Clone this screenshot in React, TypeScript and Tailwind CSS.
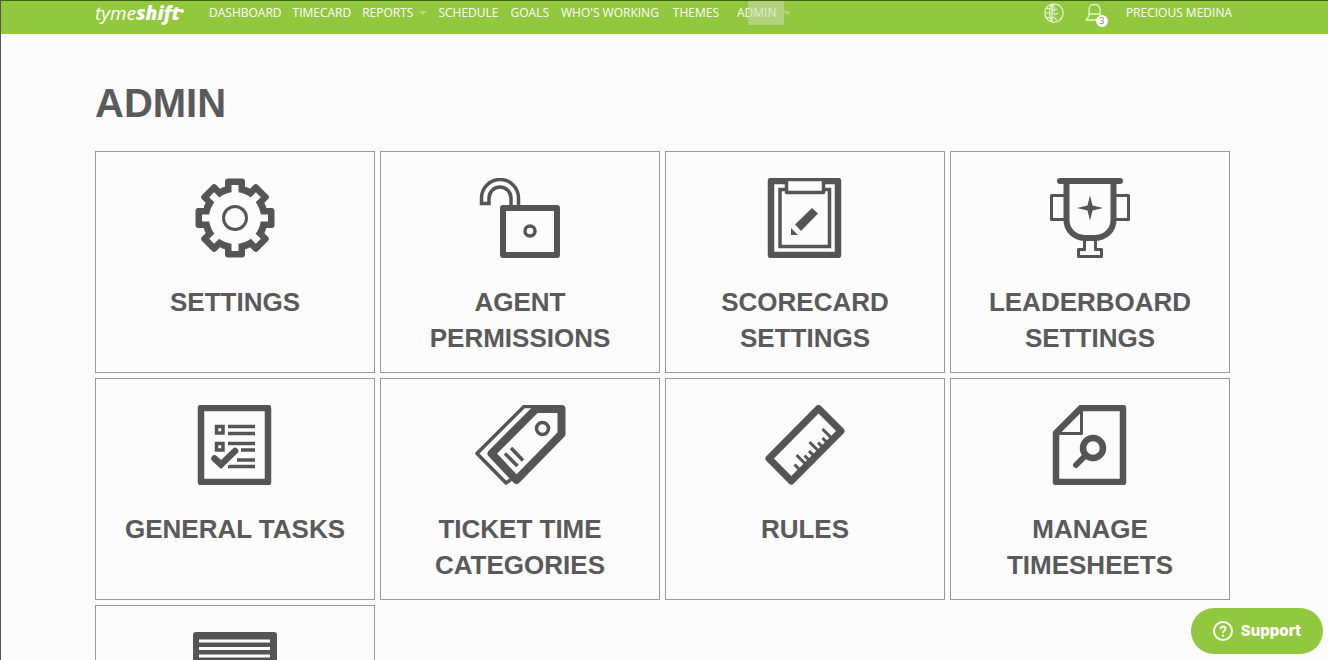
import type { ReactNode } from 'react';

const NAV_ITEMS = [
  { label: 'Dashboard', spacing: 'mr-[11px]' },
  { label: 'Timecard', spacing: 'mr-[11px]' },
  { label: 'Reports', spacing: 'mr-[11px]', caret: true },
  { label: 'Schedule', spacing: 'mr-3' },
  { label: 'Goals', spacing: 'mr-3' },
  { label: "Who's Working", spacing: 'mr-[14px]' },
  { label: 'Themes', spacing: 'mr-[18px]' },
  { label: 'Admin', spacing: '', caret: true, active: true },
];

function Icon({ children }: { children: ReactNode }) {
  return (
    <svg
      viewBox="0 0 110 80"
      className="h-20 w-[110px] shrink-0 text-[#555]"
      fill="none"
      stroke="currentColor"
      strokeWidth="6"
      strokeLinejoin="round"
      aria-hidden="true"
    >
      {children}
    </svg>
  );
}

const GEAR_ANGLES = [0, 45, 90, 135, 180, 225, 270, 315];

function GearIcon() {
  return (
    <Icon>
      <g fill="currentColor" stroke="none">
        <circle cx="55" cy="40" r="33" />
        {GEAR_ANGLES.map((a) => (
          <rect key={a} x="45" y="0.5" width="20" height="20" rx="3" transform={`rotate(${a} 55 40)`} />
        ))}
      </g>
      <g fill="#fcfcfc" stroke="none">
        <circle cx="55" cy="40" r="26" />
        {GEAR_ANGLES.map((a) => (
          <rect key={a} x="51.5" y="7" width="7" height="12" transform={`rotate(${a} 55 40)`} />
        ))}
      </g>
      <circle cx="55" cy="40" r="11.5" strokeWidth="3" />
    </Icon>
  );
}

function LockIcon() {
  return (
    <Icon>
      <path d="M53.5 29V20A18.5 18.5 0 0 0 16.5 20V25.5H24V20A11 11 0 0 1 46 20V29" strokeWidth="3.5" strokeLinejoin="miter" />
      <rect x="38" y="30" width="54" height="47" />
      <circle cx="65" cy="53" r="5" strokeWidth="3.5" />
    </Icon>
  );
}

function ClipboardIcon() {
  return (
    <Icon>
      <rect x="21" y="3" width="67" height="74" strokeWidth="6.5" />
      <rect x="30" y="11.5" width="49.5" height="57" strokeWidth="3.5" strokeLinejoin="miter" />
      <path d="M36.5 1.5H73.5V14.5H36.5Z" fill="#fcfcfc" strokeWidth="3.5" />
      <path d="M62 30L68 35.5L51 53L45 46.5ZM41 50L48 57H41Z" fill="currentColor" stroke="none" />
    </Icon>
  );
}

function TrophyIcon() {
  return (
    <Icon>
      <path d="M25 3H85" strokeLinecap="round" />
      <path d="M31.5 4V42A18 18 0 0 0 49.5 60H60.5A18 18 0 0 0 78.5 42V4" />
      <path d="M29 17.5H16.5V41.5H29M81 17.5H93.5V41.5H81M49.5 61V71.5H43.5V78.5H66.5V71.5H60.5V61" strokeWidth="3" />
      <path d="M55 17.5L57.5 27.5L68 30L57.5 32.5L55 42.5L52.5 32.5L42 30L52.5 27.5Z" fill="currentColor" stroke="none" />
    </Icon>
  );
}

function TasksIcon() {
  return (
    <Icon>
      <rect x="21" y="3" width="67" height="74" strokeWidth="6.5" />
      <g strokeWidth="3.5" strokeLinejoin="miter">
        <rect x="36.5" y="21.5" width="6.5" height="6.5" />
        <rect x="36.5" y="38.5" width="6.5" height="6.5" />
        <path d="M48 21.5H75M48 28.5H75M48 38.5H75M61 45H75M57 55H75M48 61.5H75" />
      </g>
      <path d="M34.5 53.5L41 59.5L55 46" stroke="#fcfcfc" strokeWidth="11" strokeLinecap="round" />
      <path d="M34.5 53.5L41 59.5L55 46" strokeWidth="6.5" strokeLinecap="round" strokeLinejoin="miter" />
    </Icon>
  );
}

function TagsIcon() {
  return (
    <Icon>
      <path d="M72 1.5H59L12 48.5L41 78L48 73" strokeWidth="3.5" />
      <path d="M71 4H96.5V29L51.5 75L26.5 48.5Z" fill="#fcfcfc" strokeWidth="8" />
      <circle cx="77.5" cy="23.5" r="6" strokeWidth="3.5" />
      <path d="M40 48.5L52.5 61M46 43L58 55.5" strokeWidth="3.5" />
    </Icon>
  );
}

function RulerIcon() {
  return (
    <Icon>
      <path d="M68.5 3.5L91 26L41.3 76L19 53.5Z" strokeWidth="7" />
      <path
        d="M46.5 50L56 59.5M59.5 37L69 46.5M72.5 24L82 33.5M44.5 59.5L51 66M54.5 50.5L61 57M59 46L65.5 52.5M68 37.500L74.5 44M72.5 33L79 39.5"
        strokeWidth="3"
      />
    </Icon>
  );
}

function TimesheetIcon() {
  return (
    <Icon>
      <path d="M46 3H88V77H21V28Z" strokeWidth="6.5" />
      <path d="M46.5 4V28.5H21" strokeWidth="3" />
      <circle cx="58" cy="43" r="10" strokeWidth="6.5" />
      <path d="M51 50L41 60" strokeLinecap="round" />
    </Icon>
  );
}

function ListIcon() {
  return (
    <Icon>
      <rect x="13" y="0" width="84" height="80" rx="3" fill="currentColor" stroke="none" />
      <path d="M19 9H90M19 16.5H90M19 24H90" stroke="#fcfcfc" strokeWidth="3" />
    </Icon>
  );
}

const CARDS = [
  { title: 'Settings', icon: <GearIcon /> },
  { title: 'Agent Permissions', icon: <LockIcon /> },
  { title: 'Scorecard Settings', icon: <ClipboardIcon /> },
  { title: 'Leaderboard Settings', icon: <TrophyIcon /> },
  { title: 'General Tasks', icon: <TasksIcon /> },
  { title: 'Ticket Time Categories', icon: <TagsIcon /> },
  { title: 'Rules', icon: <RulerIcon /> },
  { title: 'Manage Timesheets', icon: <TimesheetIcon /> },
  { title: '', icon: <ListIcon /> },
];

function Header() {
  return (
    <header className="h-[34px] border-t border-[#3f6312] bg-[#92c83e] pr-24 pl-[94px] font-['Open_Sans',sans-serif] text-white">
      <div className="flex h-6 items-center">
        <a href="#" className="flex w-[114px] shrink-0 items-center text-[19px] leading-5 italic">
          <span>tyme</span>
          <span className="font-extrabold">shift</span>
          <span className="mb-1 size-1 rounded-full bg-white" />
        </a>
        <nav className="flex items-center text-xs leading-6 whitespace-nowrap uppercase">
          {NAV_ITEMS.map((item) => (
            <a key={item.label} href="#" className={`relative flex items-center ${item.spacing}`}>
              {item.label}
              {item.caret && (
                <svg viewBox="0 0 8 4" className="ml-[6px] h-1 w-2 opacity-30" fill="currentColor" aria-hidden="true">
                  <path d="M0 0H8L4 4Z" />
                </svg>
              )}
              {item.active && <span className="absolute top-0 left-[11px] h-6 w-9 bg-[#c9d9ae]/60" />}
            </a>
          ))}
        </nav>
        <div className="ml-auto flex items-center">
          <button type="button" aria-label="Language" className="mr-5 opacity-80">
            <svg viewBox="0 0 20 20" className="size-5" fill="none" stroke="currentColor" strokeWidth="1.2" aria-hidden="true">
              <circle cx="10" cy="10" r="9.2" />
              <path d="M8 1Q3 10 8 19M8 1V19M8 1Q12 4 9 8L13 6M1 10H11M2 5.5H8M2 14.500H8M10 12L14 10M9 14L13 17" />
            </svg>
          </button>
          <button type="button" aria-label="Notifications" className="relative mr-[22px]">
            <svg viewBox="0 0 20 20" className="size-5 opacity-80" fill="none" stroke="currentColor" strokeWidth="1.3" aria-hidden="true">
              <path d="M5 13V7Q5 1.5 10.500 1.500Q16 1.500 16 7V13M5 11H16M5 13L2 17H18L16 13" />
            </svg>
            <span className="absolute top-3 left-3 flex size-3 items-center justify-center rounded-full bg-white text-[9px] leading-3 text-[#6f9a2c]">
              3
            </span>
          </button>
          <a href="#" className="text-xs leading-6 uppercase">
            Precious Medina
          </a>
        </div>
      </div>
    </header>
  );
}

export default function App() {
  return (
    <div className="min-h-screen overflow-hidden border-l border-[#555] bg-[#fcfcfc] font-['Liberation_Sans',Arial,sans-serif] text-[#5a5a5a]">
      <Header />
      <main className="pt-11 pr-[98px] pb-10 pl-[94px]">
        <h1 className="text-[40px] leading-[50px] font-bold uppercase">Admin</h1>
        <div className="mt-[23px] grid grid-cols-4 gap-[5px]">
          {CARDS.map((card) => (
            <a
              key={card.title}
              href="#"
              aria-label={card.title || 'List'}
              className="flex min-h-[222px] flex-col items-center border border-[#999] px-5 pt-[26px] pb-4"
            >
              {card.icon}
              {card.title && (
                <h2 className="mt-[26px] text-center text-[26px] leading-9 font-bold uppercase">{card.title}</h2>
              )}
            </a>
          ))}
        </div>
      </main>

      <button
        type="button"
        className="fixed right-[5px] bottom-[6px] flex h-[46px] items-center gap-2 rounded-full bg-[#92c83e] px-[22px] font-['Inter',sans-serif] text-[15px] font-extrabold text-white"
      >
        <svg viewBox="0 0 20 20" className="size-5" fill="none" stroke="currentColor" strokeWidth="2" aria-hidden="true">
          <circle cx="10" cy="10" r="9" />
          <path d="M7.5 8Q7.5 5.5 10 5.5Q12.5 5.5 12.5 7.8Q12.5 9 11 10Q10 10.7 10 12M10 13.5V15.5" />
        </svg>
        Support
      </button>
    </div>
  );
}
